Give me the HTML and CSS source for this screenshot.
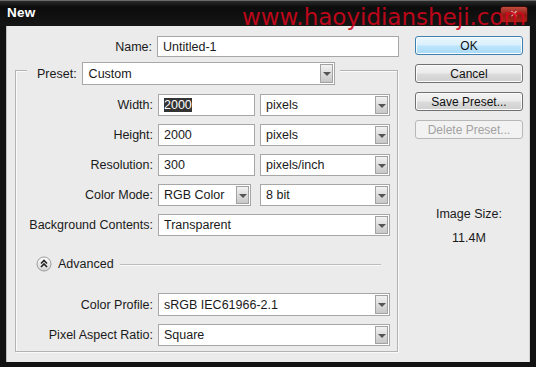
FILE: index.html
```html
<!DOCTYPE html>
<html>
<head>
	<title>New</title>
	<meta charset="utf-8">
	<link rel="stylesheet" href="styles.css">
</head>
<body>

	<div class="window">
		<div class="titlebar">
			<span class="title">New</span>
			<span class="close">&times;</span>
		</div>
		<div class="watermark">www.haoyidiansheji.com</div>

		<div class="client">
			<div class="main">
				<div class="row name-row">
					<span class="lbl outer">Name:</span>
					<div class="field name-field">Untitled-1</div>
				</div>

				<div class="group">
					<div class="group-head">
						<span>Preset:</span>
						<div class="field select preset">Custom<span class="arrow"></span></div>
					</div>

					<div class="row first">
						<span class="lbl">Width:</span>
						<div class="field num"><span class="picked">2000</span></div>
						<div class="field select unit">pixels<span class="arrow"></span></div>
					</div>
					<div class="row">
						<span class="lbl">Height:</span>
						<div class="field num">2000</div>
						<div class="field select unit">pixels<span class="arrow"></span></div>
					</div>
					<div class="row">
						<span class="lbl">Resolution:</span>
						<div class="field num">300</div>
						<div class="field select unit">pixels/inch<span class="arrow"></span></div>
					</div>
					<div class="row">
						<span class="lbl">Color Mode:</span>
						<div class="field select mode">RGB Color<span class="arrow"></span></div>
						<div class="field select unit bits">8 bit<span class="arrow"></span></div>
					</div>
					<div class="row">
						<span class="lbl">Background Contents:</span>
						<div class="field select wide">Transparent<span class="arrow"></span></div>
					</div>

					<div class="advanced">
						<svg class="adv-icon" width="16" height="16" viewBox="0 0 16 16">
							<defs>
								<linearGradient id="ag" x1="0" y1="0" x2="0" y2="1">
									<stop offset="0" stop-color="#ffffff"/>
									<stop offset="1" stop-color="#d4d4d4"/>
								</linearGradient>
							</defs>
							<circle cx="8" cy="8" r="7" fill="url(#ag)" stroke="#9a9a9a"/>
							<path d="M5 7.5 L8 4.5 L11 7.5 M5 11 L8 8 L11 11" fill="none" stroke="#222" stroke-width="1.6"/>
						</svg>
						<span>Advanced</span>
						<span class="rule"></span>
					</div>

					<div class="row profile">
						<span class="lbl">Color Profile:</span>
						<div class="field select wide">sRGB IEC61966-2.1<span class="arrow"></span></div>
					</div>
					<div class="row">
						<span class="lbl">Pixel Aspect Ratio:</span>
						<div class="field select wide">Square<span class="arrow"></span></div>
					</div>
				</div>
			</div>

			<div class="side">
				<button class="btn ok">OK</button>
				<button class="btn">Cancel</button>
				<button class="btn">Save Preset...</button>
				<button class="btn off">Delete Preset...</button>
				<div class="size-lbl">Image Size:</div>
				<div class="size-val">11.4M</div>
			</div>
		</div>
	</div>

</body>
</html>
```

FILE: styles.css
```css
*, *:before, *:after { box-sizing: border-box; }

body { margin: 0; background: #1b1b1b; font-family: "Liberation Sans", Arial, sans-serif; font-size: 12.5px; color: #1a1a1a; }

.window {
	position: relative; width: 536px; height: 367px;
	background: #121212; padding: 0 6px 5px 6px;
	display: flex; flex-direction: column;
	border-top: 1px solid #6a6a6a;
}

.titlebar {
	height: 25px; display: flex; align-items: center; justify-content: space-between;
	background: linear-gradient(#2a2a2a 0, #0c0c0c 6px, #151515 100%);
	margin: 0 -6px; padding: 0 8px 2px 7px;
}
.title { color: #fff; font-weight: bold; font-size: 13.5px; letter-spacing: 0.3px; }
.close {
	width: 28px; height: 17px; margin-top: 3px; border: 1px solid #3a0d0d; border-radius: 3px;
	background: linear-gradient(#c24a3e, #8c1a12 55%, #a3261c);
	color: #f5c9c4; font-size: 13px; line-height: 14px; text-align: center;
}

/* watermark lies over the title bar */
.watermark {
	position: absolute; left: 242px; top: 3px;
	font-family: "DejaVu Sans", sans-serif; font-size: 23px; line-height: 27px;
	color: #d4061c; opacity: 0.88; pointer-events: none;
}

.client {
	flex: 1; display: flex; background: #ebebeb;
	border-left: 1px solid #bdbdbd; border-right: 1px solid #d0d0d0;
}

.main { width: 394px; padding-top: 10px; }

.row { display: flex; align-items: center; gap: 5px; height: 22px; margin-top: 8px; }
.row.first { margin-top: 9px; }
.row.profile { margin-top: 21px; height: 23px; }
.name-row { margin-top: 0; height: 21px; }

.lbl { width: 137px; text-align: right; white-space: nowrap; }
.lbl.outer { width: 145px; }

.field {
	position: relative; height: 100%; background: #fff;
	border: 1px solid #a7a7a7; padding-left: 5px;
	display: flex; align-items: center; white-space: nowrap;
}
.name-field { width: 242px; }
.num { width: 97px; }
.unit { width: 130px; }
.unit.bits { margin-left: 4px; }
.mode { width: 93px; }
.wide { width: 232px; }

.picked { background: #333; color: #fff; }

.arrow {
	position: absolute; right: 1px; top: 1px; bottom: 1px; width: 13px;
	border: 1px solid #a2a2a2;
	background: linear-gradient(#f2f2f2, #c7c7c7);
}
.arrow:after {
	content: ""; position: absolute; left: 2px; top: 7px;
	border-left: 4px solid transparent; border-right: 4px solid transparent; border-top: 4px solid #555;
}

.group {
	width: 383px; margin: 13px 0 0 8px; padding-bottom: 5px;
	border: 1px solid #b3b3b3; box-shadow: 1px 1px 0 #fafafa, inset 1px 1px 0 #fafafa;
}
.group-head {
	width: fit-content; height: 23px; margin: -9px 0 0 11px; padding: 0 5px 0 10px;
	display: flex; align-items: center; gap: 5px; background: #ebebeb;
}
.preset { width: 253px; padding-left: 6px; }

.advanced {
	display: flex; align-items: center; height: 16px; margin-top: 20px; padding-left: 20px;
}
.adv-icon { margin-right: 6px; }
.rule { flex: 1; height: 1px; background: #bcbcbc; margin: 0 16px 0 6px; box-shadow: 0 1px 0 #fafafa; }

.side {
	width: 108px; margin-left: 14px; padding-top: 10px;
	display: flex; flex-direction: column; align-items: stretch;
}

.btn {
	height: 19px; margin: 0 0 9px 0; padding: 0;
	font-family: inherit; font-size: 12px; color: #111;
	border: 1px solid #707070; border-radius: 3px;
	background: linear-gradient(#f3f3f3 0, #ebebeb 48%, #dcdcdc 52%, #cfcfcf 100%);
	box-shadow: inset 0 0 0 1px #fbfbfb;
}
.btn.ok {
	border-color: #3c7fb1;
	background: linear-gradient(#eaf6fd 0, #d9f0fc 48%, #bee6fd 52%, #a7d9f5 100%);
}
.btn.off {
	color: #a2a2a2; border-color: #b8b8b8;
	background: #f2f2f2; box-shadow: none;
}

.size-lbl { text-align: center; margin-top: 58px; line-height: 16px; }
.size-val { text-align: center; margin-top: 8px; line-height: 16px; }
```
